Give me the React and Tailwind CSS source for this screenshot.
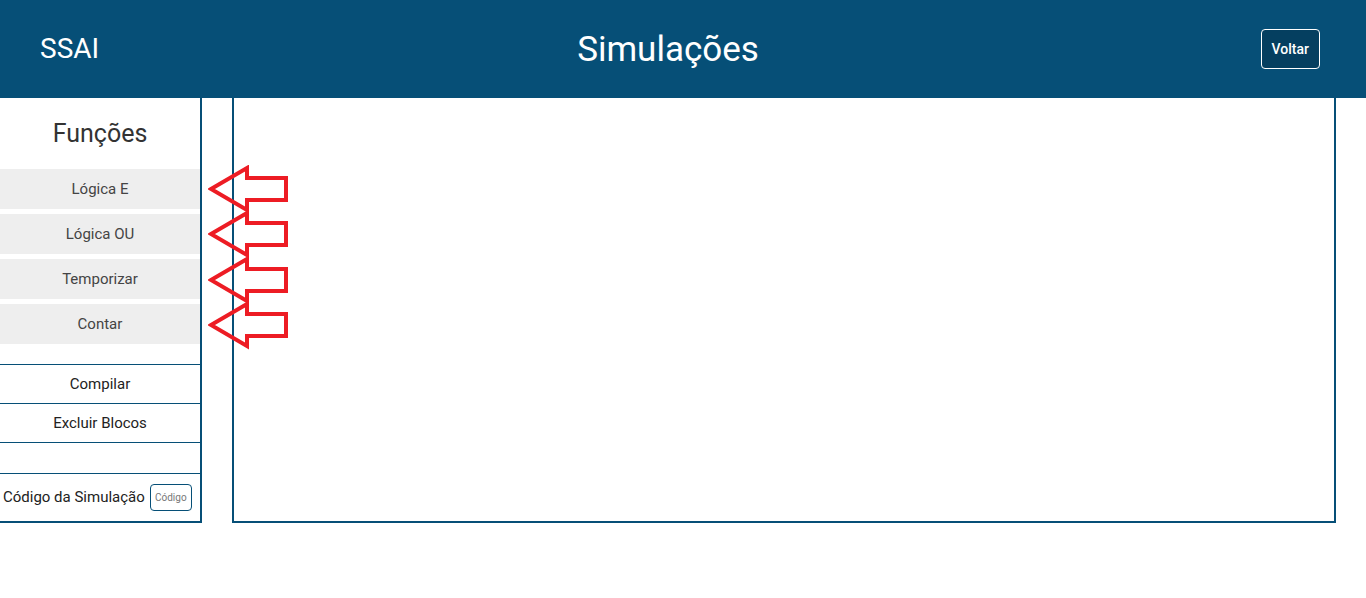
import React from 'react';

const funcoes = ['Lógica E', 'Lógica OU', 'Temporizar', 'Contar'];
const arrowCenters = [24, 69, 115, 160];

function Arrows() {
  return (
    <svg
      className="pointer-events-none absolute left-[208px] top-[165px]"
      width="84"
      height="186"
      viewBox="0 0 84 186"
    >
      {arrowCenters.map((cy) => (
        <path
          key={cy}
          d={`M3 ${cy} L39 ${cy - 21} L39 ${cy - 11} L78 ${cy - 11} L78 ${cy + 11} L39 ${cy + 11} L39 ${cy + 21} Z`}
          fill="none"
          stroke="#ed1c24"
          strokeWidth="4"
          strokeLinejoin="miter"
        />
      ))}
    </svg>
  );
}

export default function App() {
  return (
    <div className="relative min-h-[598px] bg-white font-['Roboto',sans-serif]">
      {/* Header */}
      <header className="relative z-10 flex h-[98px] items-center bg-[#064f77] px-[40px] text-white">
        <div className="w-[200px] text-[28px]">SSAI</div>
        <h1 className="flex-1 text-center text-[35px] leading-none">Simulações</h1>
        <div className="flex w-[230px] justify-end pr-[6px]">
          <button className="h-[40px] rounded-[4px] border border-white bg-[#053f60] px-[10px] text-[14px] font-medium">
            Voltar
          </button>
        </div>
      </header>

      <div className="flex">
        {/* Sidebar */}
        <aside className="flex h-[425px] w-[202px] flex-col border-b-2 border-r-2 border-[#064f77]">
          <div className="flex h-[71px] items-center justify-center text-[25px] text-[#333]">
            Funções
          </div>
          <div className="flex flex-col gap-[5px]">
            {funcoes.map((f) => (
              <button
                key={f}
                className="flex h-[40px] items-center justify-center bg-[#eeeeee] text-[15px] text-[#444]"
              >
                {f}
              </button>
            ))}
          </div>
          <div className="mt-[20px] border-t border-[#064f77]">
            <div className="flex h-[39px] items-center justify-center border-b border-[#064f77] text-[15px] text-[#222]">
              Compilar
            </div>
            <div className="flex h-[39px] items-center justify-center border-b border-[#064f77] text-[15px] text-[#222]">
              Excluir Blocos
            </div>
            <div className="h-[31px] border-b border-[#064f77]" />
          </div>
          <div className="flex flex-1 items-center gap-[5px] pl-[3px] text-[15px] text-[#222]">
            <span>Código da Simulação</span>
            <button className="h-[27px] w-[42px] rounded-[4px] border border-[#064f77] text-[10px] text-[#777]">
              Código
            </button>
          </div>
        </aside>

        {/* Canvas */}
        <main className="ml-[30px] mr-[30px] h-[425px] flex-1 border-x-2 border-b-2 border-[#064f77]" />
      </div>

      <Arrows />
    </div>
  );
}
